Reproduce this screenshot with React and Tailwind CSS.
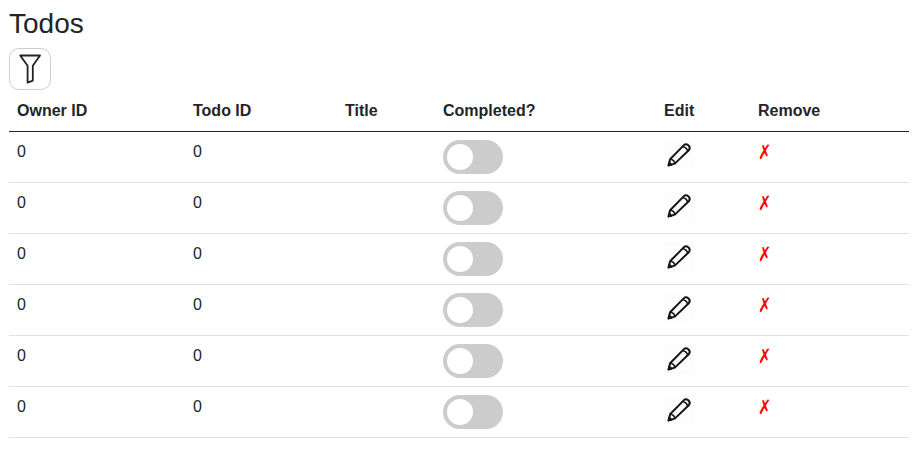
const rows = [0, 1, 2, 3, 4, 5].map((key) => ({ key, ownerId: 0, todoId: 0, title: "" }));

function FilterIcon() {
  return (
    <svg width="40" height="40" viewBox="0 0 40 40" fill="none" stroke="#222" strokeWidth="1.8" strokeLinejoin="round">
      <path d="M10.2 6.5H30L22.8 16.8V31.6L17.6 33.6V16.8Z" />
    </svg>
  );
}

function PencilIcon() {
  return (
    <svg width="30" height="30" viewBox="0 0 30 30" fill="none" stroke="#151515" strokeWidth="2" strokeLinejoin="round">
      <rect width="30" height="30" fill="#fdfdfd" stroke="none" />
      <path d="M4.6 25.4L6.1 19.3L19.7 5.4C22.4 2.6 27.4 6.2 25 10L10.8 23.6Z" />
      <path d="M6.1 19.3C8.4 19.4 10.4 21.2 10.8 23.6M18.7 6.7C21.1 6.7 23.4 8.8 23.6 11.2" strokeWidth="1.6" />
      <path d="M4.6 25.4L5.3 22.6L7.5 24.7Z" fill="#151515" />
    </svg>
  );
}

function Toggle() {
  return (
    <button type="button" role="switch" aria-checked="false" className="flex h-[34px] w-[60px] items-center rounded-full bg-[#ccc] pl-1">
      <span className="size-[26px] rounded-full bg-white" />
    </button>
  );
}

export default function App() {
  return (
    <main className="h-[456px] bg-white px-[9px] pt-2 font-['Liberation_Sans',Arial,sans-serif] text-base text-[#212529]">
      <h3 className="h-10 pt-px text-[28px] leading-[30px]">Todos</h3>
      <button type="button" aria-label="Filter" className="flex size-[42px] items-center justify-center rounded-[10px] border border-[#ccc]">
        <FilterIcon />
      </button>
      <table className="w-[900px] table-fixed border-separate border-spacing-0">
        <colgroup>
          <col className="w-[176px]" />
          <col className="w-[152px]" />
          <col className="w-[98px]" />
          <col className="w-[221px]" />
          <col className="w-[94px]" />
          <col className="w-[159px]" />
        </colgroup>
        <thead>
          <tr className="h-[42px] text-left [&>th]:border-b [&>th]:border-[#212529] [&>th]:px-2 [&>th]:py-0">
            <th>Owner ID</th>
            <th>Todo ID</th>
            <th>Title</th>
            <th>Completed?</th>
            <th>Edit</th>
            <th>Remove</th>
          </tr>
        </thead>
        <tbody>
          {rows.map((row) => (
            <tr key={row.key} className="h-[51px] align-top [&>td]:border-b [&>td]:border-[#dee2e6] [&>td]:px-2 [&>td]:pt-2 [&>td]:pb-0">
              <td>{row.ownerId}</td>
              <td>{row.todoId}</td>
              <td>{row.title}</td>
              <td><Toggle /></td>
              <td><PencilIcon /></td>
              <td className="text-[red]">
                <span className="inline-block translate-y-px scale-y-125 font-['DejaVu_Sans',sans-serif] leading-6">✗</span>
              </td>
            </tr>
          ))}
        </tbody>
      </table>
    </main>
  );
}
